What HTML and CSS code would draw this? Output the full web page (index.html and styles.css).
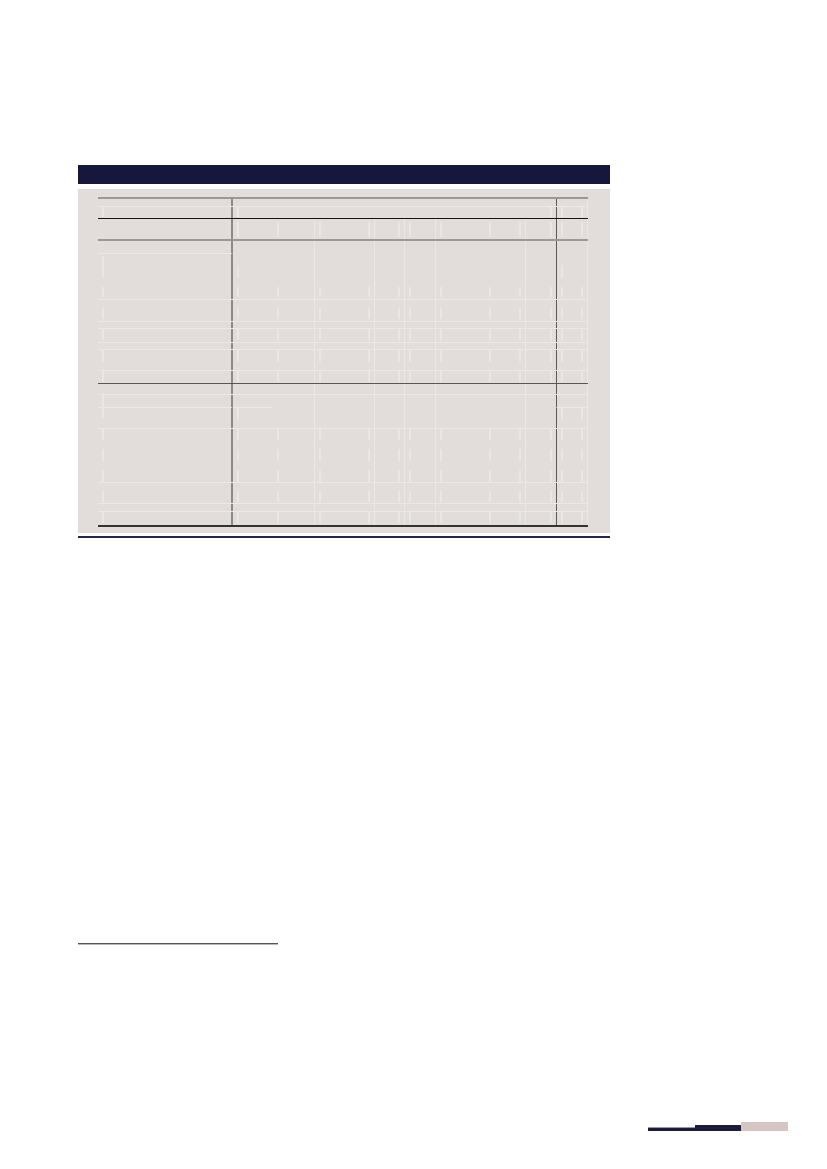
FILE: index.html
```html
<!DOCTYPE html>
<html lang="en">
<head>
<meta charset="utf-8">
<title>Table page</title>
<link rel="stylesheet" href="styles.css">
</head>
<body>
<div class="page">
  <div class="main">
    <div class="titlebar"></div>
    <div class="panel">
      <div class="tbl">
        <!-- header row 1 -->
        <div class="row h7 nt">
          <div class="c k1"></div><div class="c km"></div><div class="c k12"></div>
        </div>
        <div class="row h12 ln y0 s10">
          <div class="c k1"></div><div class="c km"></div><div class="c k12"></div>
        </div>
        <div class="line-black"></div>
        <!-- header row 2 -->
        <div class="row h20 y3 s15">
          <div class="c k1 e"></div><div class="c k2"></div><div class="c k3"></div><div class="c k4"></div><div class="c k5"></div><div class="c k6"></div><div class="c k7"></div><div class="c k8"></div><div class="c k9"></div><div class="c k10"></div><div class="c k11"></div><div class="c k12"></div>
        </div>
        <div class="line-gray"></div>
        <!-- section 1 -->
        <div class="row h12 nt">
          <div class="c k1"></div><div class="c k2"></div><div class="c k3"></div><div class="c k4"></div><div class="c k5"></div><div class="c k6"></div><div class="c k7"></div><div class="c k8"></div><div class="c k9"></div><div class="c k10"></div><div class="c k11"></div><div class="c k12"></div>
        </div>
        <div class="row h25 y12 s13">
          <div class="c k1 cl y2 s21"></div><div class="c k2"></div><div class="c k3 e"></div><div class="c k4 e"></div><div class="c k5 e"></div><div class="c k6 e"></div><div class="c k7 e"></div><div class="c k8 e"></div><div class="c k9 e"></div><div class="c k10 e"></div><div class="c k11 e"></div><div class="c k12 nr"></div>
        </div>
        <div class="row h21 y9 s10">
          <div class="c k1"></div><div class="c k2"></div><div class="c k3"></div><div class="c k4"></div><div class="c k5"></div><div class="c k6"></div><div class="c k7"></div><div class="c k8"></div><div class="c k9"></div><div class="c k10"></div><div class="c k11"></div><div class="c k12"></div>
        </div>
        <div class="row h22 ln y8 s11">
          <div class="c k1"></div><div class="c k2"></div><div class="c k3"></div><div class="c k4"></div><div class="c k5"></div><div class="c k6"></div><div class="c k7"></div><div class="c k8"></div><div class="c k9"></div><div class="c k10"></div><div class="c k11"></div><div class="c k12"></div>
        </div>
        <div class="row h7 ln nt">
          <div class="c k1"></div><div class="c k2"></div><div class="c k3"></div><div class="c k4"></div><div class="c k5"></div><div class="c k6"></div><div class="c k7"></div><div class="c k8"></div><div class="c k9"></div><div class="c k10"></div><div class="c k11"></div><div class="c k12"></div>
        </div>
        <div class="row h14 ln y0 s11">
          <div class="c k1"></div><div class="c k2"></div><div class="c k3"></div><div class="c k4"></div><div class="c k5"></div><div class="c k6"></div><div class="c k7"></div><div class="c k8"></div><div class="c k9"></div><div class="c k10"></div><div class="c k11"></div><div class="c k12"></div>
        </div>
        <div class="row h7 ln nt">
          <div class="c k1"></div><div class="c k2"></div><div class="c k3"></div><div class="c k4"></div><div class="c k5"></div><div class="c k6"></div><div class="c k7"></div><div class="c k8"></div><div class="c k9"></div><div class="c k10"></div><div class="c k11"></div><div class="c k12"></div>
        </div>
        <div class="row h21 ln y0 s12">
          <div class="c k1"></div><div class="c k2"></div><div class="c k3"></div><div class="c k4"></div><div class="c k5"></div><div class="c k6"></div><div class="c k7"></div><div class="c k8"></div><div class="c k9"></div><div class="c k10"></div><div class="c k11"></div><div class="c k12"></div>
        </div>
        <div class="row h13 ln y0 s11">
          <div class="c k1"></div><div class="c k2"></div><div class="c k3"></div><div class="c k4"></div><div class="c k5"></div><div class="c k6"></div><div class="c k7"></div><div class="c k8"></div><div class="c k9"></div><div class="c k10"></div><div class="c k11"></div><div class="c k12"></div>
        </div>
        <div class="line-dark"></div>
        <!-- section 2 -->
        <div class="row h10 nt">
          <div class="c k1"></div><div class="c k2"></div><div class="c k3"></div><div class="c k4"></div><div class="c k5"></div><div class="c k6"></div><div class="c k7"></div><div class="c k8"></div><div class="c k9"></div><div class="c k10"></div><div class="c k11"></div><div class="c k12"></div>
        </div>
        <div class="row h13 ln y0 s12">
          <div class="c k1"></div><div class="c k2 e"></div><div class="c k3 e"></div><div class="c k4 e"></div><div class="c k5 e"></div><div class="c k6 e"></div><div class="c k7 e"></div><div class="c k8 e"></div><div class="c k9 e"></div><div class="c k10 e"></div><div class="c k11 e"></div><div class="c k12 e"></div>
        </div>
        <div class="row h21 y0 s11">
          <div class="c k1 cl s10"></div><div class="c k2 cl s12"></div><div class="c k3 e"></div><div class="c k4 e"></div><div class="c k5 e"></div><div class="c k6 e"></div><div class="c k7 e"></div><div class="c k8 e"></div><div class="c k9 e"></div><div class="c k10 e"></div><div class="c k11 e"></div><div class="c k12 cl"></div>
        </div>
        <div class="row h21 ln y0 s11">
          <div class="c k1"></div><div class="c k2"></div><div class="c k3"></div><div class="c k4"></div><div class="c k5"></div><div class="c k6"></div><div class="c k7"></div><div class="c k8"></div><div class="c k9"></div><div class="c k10"></div><div class="c k11"></div><div class="c k12"></div>
        </div>
        <div class="row h21 y0 s12">
          <div class="c k1"></div><div class="c k2"></div><div class="c k3"></div><div class="c k4"></div><div class="c k5"></div><div class="c k6"></div><div class="c k7"></div><div class="c k8"></div><div class="c k9"></div><div class="c k10"></div><div class="c k11"></div><div class="c k12"></div>
        </div>
        <div class="row h12 y0 s12">
          <div class="c k1"></div><div class="c k2"></div><div class="c k3"></div><div class="c k4"></div><div class="c k5"></div><div class="c k6"></div><div class="c k7"></div><div class="c k8"></div><div class="c k9"></div><div class="c k10"></div><div class="c k11"></div><div class="c k12"></div>
        </div>
        <div class="row h21 ln y8 s11">
          <div class="c k1"></div><div class="c k2"></div><div class="c k3"></div><div class="c k4"></div><div class="c k5"></div><div class="c k6"></div><div class="c k7"></div><div class="c k8"></div><div class="c k9"></div><div class="c k10"></div><div class="c k11"></div><div class="c k12"></div>
        </div>
        <div class="row h8 ln nt">
          <div class="c k1"></div><div class="c k2"></div><div class="c k3"></div><div class="c k4"></div><div class="c k5"></div><div class="c k6"></div><div class="c k7"></div><div class="c k8"></div><div class="c k9"></div><div class="c k10"></div><div class="c k11"></div><div class="c k12"></div>
        </div>
        <div class="row h14 ln y0 s11">
          <div class="c k1"></div><div class="c k2"></div><div class="c k3"></div><div class="c k4"></div><div class="c k5"></div><div class="c k6"></div><div class="c k7"></div><div class="c k8"></div><div class="c k9"></div><div class="c k10"></div><div class="c k11"></div><div class="c k12"></div>
        </div>
        <div class="tbl-end"></div>
      </div>
    </div>
    <div class="rule"></div>
    <div class="footrule"></div>
  </div>
  <div class="folio">
    <span class="f-thin"></span><span class="f-thick"></span><span class="f-pink"></span>
  </div>
</div>
</body>
</html>
```

FILE: styles.css
```css
html, body {
  margin: 0;
  padding: 0;
  background: #ffffff;
  font-family: "Liberation Sans", Arial, sans-serif;
}

.page {
  padding-top: 165px;
}

.main {
  margin-left: 78px;
  width: 532px;
}

.titlebar {
  height: 19px;
  background: #15173d;
}

.panel {
  margin-top: 5px;
  height: 344px;
  box-sizing: border-box;
  padding: 8px 22px 0 20px;
  background: #e2dcdb;
}

.tbl {
  width: 490px;
  border-top: 2px solid #9b9797;
}

.line-black { height: 1px; background: #141414; }
.line-gray  { height: 2px; background: #9c9898; }
.line-dark  { height: 1px; background: #595656; }
.tbl-end    { height: 2px; background: #333333; }

/* rows */
.row {
  display: grid;
  grid-template-columns: 135px 40px 41px 29px 31px 30px 31px 30px 30px 30px 31px 32px;
  grid-template-rows: minmax(0, 1fr);
  box-sizing: border-box;
  --t: 0px;
  --h: 11px;
}

.h7  { height: 7px; }
.h8  { height: 8px; }
.h10 { height: 10px; }
.h12 { height: 12px; }
.h13 { height: 13px; }
.h14 { height: 14px; }
.h20 { height: 20px; }
.h21 { height: 21px; }
.h22 { height: 22px; }
.h25 { height: 25px; }

.ln { border-top: 1px solid #ece8e7; }
.cl { border-top: 1px solid #ece8e7; }

.y0  { --t: 0px; }
.y2  { --t: 2px; }
.y3  { --t: 3px; }
.y8  { --t: 8px; }
.y9  { --t: 9px; }
.y12 { --t: 12px; }
.s10 { --h: 10px; }
.s11 { --h: 11px; }
.s12 { --h: 12px; }
.s13 { --h: 13px; }
.s15 { --h: 15px; }
.s21 { --h: 21px; }

/* cells */
.c {
  display: flex;
  align-items: flex-start;
  box-sizing: border-box;
  padding: var(--t) 4px 0 4px;
  overflow: hidden;
  min-width: 0;
}

.c::before,
.k12::after,
.km::after {
  content: "";
  flex: none;
  width: 2px;
  height: var(--h);
  background: #eae6e5;
}

.nt .c::before,
.nt .k12::after,
.nt .km::after { display: none; }

.e::before,
.e::after,
.nr::after { visibility: hidden; }

.k1 { border-right: 2px solid #8e8989; }
.k4, .k6, .k7, .k8, .k11 { border-left: 1px solid #ebe7e6; }
.k12 {
  border-left: 1px solid #5b5858;
  border-right: 1px solid #ebe7e6;
  justify-content: space-between;
}
.km {
  grid-column: 2 / 12;
  justify-content: space-between;
}

.k1, .k2, .k3, .k4, .k7, .k8 { justify-content: flex-start; }
.k5, .k6, .k9, .k10, .k11 { justify-content: flex-end; }

.rule {
  margin-top: 3px;
  height: 2px;
  background: #23254f;
}

.footrule {
  margin-top: 405px;
  width: 200px;
  height: 1px;
  background: #555555;
  border-bottom: 1px solid #b8b8b8;
}

/* page folio ornament */
.folio {
  margin-top: 177px;
  display: flex;
  justify-content: flex-end;
  align-items: flex-end;
  padding-right: 39px;
}

.f-thin {
  display: block;
  width: 47px;
  height: 3px;
  border-top: 1px solid #9896ab;
  background: #1b1c3e;
}

.f-thick {
  display: block;
  width: 46px;
  height: 6px;
  background: #1b1c3e;
}

.f-pink {
  display: block;
  width: 47px;
  height: 9px;
  background: #d5c6c4;
}
```
